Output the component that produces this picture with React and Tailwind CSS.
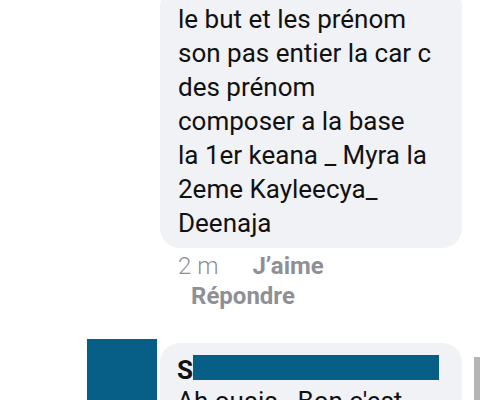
import React from "react";

const LINES = [
  "le but et les prénom",
  "son pas entier la car c",
  "des prénom",
  "composer a la base",
  "la 1er keana _ Myra la",
  "2eme Kayleecya_",
  "Deenaja",
];

export default function App() {
  return (
    <div className="w-[480px] h-[400px] overflow-hidden bg-white font-['Roboto',sans-serif]">
      {/* first comment bubble */}
      <div className="ml-[160px] w-[302px] -mt-[13px] pt-[15px] pb-[8px] pl-[18px] bg-[#f0f2f5] rounded-[20px] text-[26px] leading-[34px] text-[#111111]">
        {LINES.map((line) => (
          <div key={line}>{line}</div>
        ))}
      </div>

      {/* meta */}
      <div className="ml-[178px] mt-[3px] text-[24px] leading-[30px] text-[#8e9095]">
        <div className="flex">
          <span className="font-light">2 m</span>
          <span className="ml-[34px] font-bold">J’aime</span>
        </div>
        <div className="ml-[13px] font-bold">Répondre</div>
      </div>

      {/* second comment */}
      <div className="mt-[28px] flex items-start">
        <div className="ml-[87px] w-[70px] h-[80px] bg-[#075f88]" />
        <div className="ml-[3px] mt-[4px] w-[302px] h-[80px] pt-[10px] pl-[17px] bg-[#f0f2f5] rounded-[20px] text-[#111111]">
          <div className="flex items-start text-[26px] leading-[34px] font-bold">
            <span>S</span>
            <div className="mt-[2px] w-[246px] h-[25px] bg-[#075f88]" />
          </div>
          <div className="text-[26px] leading-[28px]">Ah ouais . Bon c'est</div>
        </div>
        <div className="ml-[12px] mt-[18px] w-[6px] h-[60px] bg-[#b4b4b4]" />
      </div>
    </div>
  );
}
